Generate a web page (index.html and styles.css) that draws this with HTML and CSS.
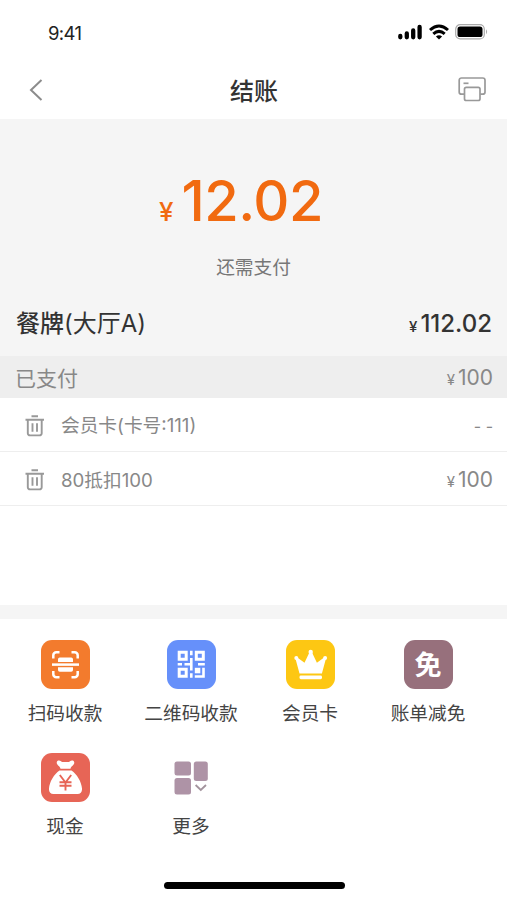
FILE: index.html
```html
<!DOCTYPE html>
<html lang="zh-CN">
<head>
<meta charset="UTF-8">
<meta name="viewport" content="width=device-width, initial-scale=1.0">
<title>结账</title>
<link rel="stylesheet" href="styles.css">
</head>
<body>
<div class="page">
  <div class="status-bar">
    <span class="time">9:41</span>
    <div class="status-icons">
      <svg width="25" height="16" viewBox="0 0 25 16" stroke="#000" stroke-width="4.300" stroke-linecap="round">
        <path d="M2.300 12v1.300M8.800 9.500v3.800M15.200 6.500v6.800M21.600 3v10.300"/>
      </svg>
      <svg width="20" height="16" viewBox="0 0 20 16" fill="none" stroke="#000" stroke-width="3">
        <path d="M1 6Q10 -2 19 6M4.300 9.900Q10 4.900 15.700 9.900"/>
        <path d="M10 15.500L6.900 12.400Q10 10 13.100 12.400Z" fill="#000" stroke="none"/>
      </svg>
      <svg width="33" height="16" viewBox="0 0 33 16">
        <rect x="0.700" y="0.700" width="28.600" height="14.200" rx="4.500" fill="none" stroke="#aaa" stroke-width="1.200"/>
        <rect x="2.500" y="2.500" width="25" height="10.600" rx="2.600" fill="#000"/>
        <path d="M31 5.300q2.200 2.500 0 5z" fill="#aaa"/>
      </svg>
    </div>
  </div>

  <div class="nav">
    <svg width="14" height="22" viewBox="0 0 14 22" fill="none" stroke="#8c8c8c" stroke-width="2">
      <path d="M12.500 1L2 11l10.500 10"/>
    </svg>
    <h1>结账</h1>
    <svg width="28" height="25" viewBox="0 0 28 25" fill="none" stroke="#999" stroke-width="1.700">
      <path d="M6.500 17.200H3.500a2.300 2.300 0 0 1-2.300-2.300V3.300A2.300 2.300 0 0 1 3.500 1h21.200A2.300 2.300 0 0 1 27 3.300v11.600a2.300 2.300 0 0 1-2.300 2.300h-2.500"/>
      <rect x="6.500" y="10.300" width="15.500" height="13.200" rx="1.800"/>
      <path d="M5.500 6.300h5"/>
    </svg>
  </div>

  <div class="summary">
    <div class="amount"><span class="yen">¥</span><span class="num">12.02</span></div>
    <div class="tip">还需支付</div>
    <div class="table-row">
      <span><b>餐牌</b>(大厅A)</span>
      <span class="total"><span class="yen">¥</span>112.02</span>
    </div>
  </div>

  <div class="paid-title">
    <span>已支付</span>
    <span class="price"><span class="yen">¥</span>100</span>
  </div>
  <div class="paid-list">
    <div class="paid-item">
      <svg width="20" height="22" viewBox="0 0 20 22" fill="none" stroke="#999" stroke-width="1.900">
        <path d="M0.500 4.800h18.500M6.500 1.200h6.500M2.800 5v13.200a2.200 2.200 0 0 0 2.200 2.200h9.500a2.200 2.200 0 0 0 2.200-2.200V5M7.500 8.300v8.500M12 8.300v8.500"/>
      </svg>
      <span class="name">会员卡(卡号:111)</span>
      <span class="dash">- -</span>
    </div>
    <div class="paid-item">
      <svg width="20" height="22" viewBox="0 0 20 22" fill="none" stroke="#999" stroke-width="1.900">
        <path d="M0.500 4.800h18.500M6.500 1.200h6.500M2.800 5v13.200a2.200 2.200 0 0 0 2.200 2.200h9.500a2.200 2.200 0 0 0 2.200-2.200V5M7.500 8.300v8.500M12 8.300v8.500"/>
      </svg>
      <span class="name">80抵扣100</span>
      <span class="price"><span class="yen">¥</span>100</span>
    </div>
  </div>

  <div class="pay-grid">
    <div class="pay">
      <div class="icon orange">
        <svg width="49" height="49" viewBox="0 0 49 49" fill="none" stroke="#fff" stroke-width="2.500">
          <path d="M12.300 18.500v-3.200a3 3 0 0 1 3-3h3.200M30.500 12.300h3.200a3 3 0 0 1 3 3v3.200M12.300 31v3.200a3 3 0 0 0 3 3h3.200M30.500 37.200h3.200a3 3 0 0 0 3-3V31"/>
          <path d="M17 22v-2.800a1.800 1.800 0 0 1 1.800-1.800h11.400a1.800 1.800 0 0 1 1.800 1.800V22zM17 27.200V30a1.800 1.800 0 0 0 1.800 1.800h11.400A1.800 1.800 0 0 0 32 30v-2.800z" fill="#fff" stroke="none"/>
          <path d="M11 24.600h27"/>
        </svg>
      </div>
      <span>扫码收款</span>
    </div>
    <div class="pay">
      <div class="icon blue">
        <svg width="49" height="49" viewBox="0 0 49 49" fill="none" stroke="#fff" stroke-width="3">
          <path d="M12.200 12.200h7v7h-7zM29.300 12.200h7v7h-7zM12.200 29.300h7v7h-7z"/>
          <path d="M24.300 10.700v4.500M24.300 18v12.500M24.300 33.300v4.500M10.700 24.300H15M17.500 24.300h7M31 24.300h6.800" stroke-width="2.600"/>
          <path d="M36.500 27.800v8.700h-8.700" stroke-width="2.600"/>
          <path d="M27.800 27.800h5.500v5.500h-5.500z" fill="#fff" stroke="none"/>
        </svg>
      </div>
      <span>二维码收款</span>
    </div>
    <div class="pay">
      <div class="icon yellow">
        <svg width="49" height="49" viewBox="0 0 49 49" fill="#fff">
          <path d="M13.500 33.500L9.500 18.800l1.800-1.300 7.200 5.200 5-10.500h2.400l5 10.500 7.200-5.200 1.800 1.300-4 14.700z"/>
          <circle cx="24.700" cy="12" r="2.200"/>
          <circle cx="10.300" cy="18" r="2"/>
          <circle cx="39.100" cy="18" r="2"/>
          <rect x="13.500" y="35.500" width="22.500" height="3.700" rx="1.400"/>
        </svg>
      </div>
      <span>会员卡</span>
    </div>
    <div class="pay">
      <div class="icon purple">免</div>
      <span>账单减免</span>
    </div>
    <div class="pay">
      <div class="icon red">
        <svg width="49" height="49" viewBox="0 0 49 49" fill="none">
          <path d="M19.500 15.700c-.5-2.500-3.800-3.700-3.800-6 0-2.500 3-2.500 4.300-1.500 1.500 1.300 2.500.8 4.500.800s3 .5 4.500-.8c1.300-1 4.300-1 4.300 1.500 0 2.300-3.300 3.500-3.800 6zM18.500 17.500h12c5.500 3.500 10 11.500 10.500 18 .3 3.500-1.500 5.500-4.500 5.500h-24c-3 0-4.800-2-4.500-5.500.5-6.500 5-14.500 10.500-18z" fill="#fff"/>
          <path d="M18.800 22l5.700 7.500 5.700-7.500M24.500 29.500v8M18.500 29.300h12M18.500 32.800h12" stroke="#e76556" stroke-width="1.900"/>
        </svg>
      </div>
      <span>现金</span>
    </div>
    <div class="pay">
      <div class="icon">
        <svg width="49" height="49" viewBox="0 0 49 49" fill="#ae93a6">
          <rect x="7.500" y="8.500" width="16.500" height="14" rx="2.500"/>
          <rect x="26.800" y="8.500" width="14" height="19.500" rx="2.500"/>
          <rect x="7.500" y="25" width="16.500" height="16.500" rx="2.500"/>
          <path d="M28.600 32l5.200 5 5.200-5" fill="none" stroke="#a3939d" stroke-width="1.800"/>
        </svg>
      </div>
      <span>更多</span>
    </div>
  </div>
  <div class="home-bar"></div>
</div>
</body>
</html>
```
FILE: styles.css
```css
* {
  box-sizing: border-box;
}
body {
  margin: 0;
  background: #fff;
  color: #333;
  font-family: Inter, "Noto Sans CJK SC", sans-serif;
}
svg {
  display: block;
}
.page {
  height: 900px;
  display: flex;
  flex-direction: column;
}
.status-bar {
  height: 62px;
  padding: 2px 19px 0 48px;
  display: flex;
  justify-content: space-between;
  align-items: center;
}
.time {
  padding-top: 2px;
  font-size: 18.5px;
  letter-spacing: -0.6px;
  color: #222;
}
.status-icons {
  display: flex;
  gap: 6px;
}
.nav {
  height: 57px;
  padding: 0 21px 2px 29px;
  display: flex;
  justify-content: space-between;
  align-items: center;
}
.nav h1 {
  margin: 0;
  padding: 4px 0 0 7px;
  font-size: 24px;
  line-height: 36px;
  font-weight: 500;
}
.summary {
  height: 237px;
  background: #f5f5f5;
}
.amount {
  height: 136px;
  padding: 48px 25px 0 0;
  display: flex;
  justify-content: center;
  align-items: baseline;
  color: #f16a10;
  font-size: 56px;
  line-height: 68px;
  font-weight: 500;
}
.amount .num {
  font-weight: 550;
  letter-spacing: -0.5px;
}
.amount .yen {
  margin-right: 8px;
  font-size: 26px;
}
.tip {
  height: 24px;
  line-height: 26px;
  text-align: center;
  font-size: 18.7px;
  color: #777;
}
.table-row {
  height: 77px;
  padding: 12px 15px 0 16px;
  display: flex;
  justify-content: space-between;
  align-items: center;
  font-size: 24px;
  line-height: 36px;
}
.table-row b {
  font-weight: 500;
}
.total {
  padding-top: 3px;
  font-weight: 500;
}
.total .yen {
  margin-right: 3px;
  font-size: 15px;
}
.paid-title {
  height: 42px;
  padding: 3px 14px 0 15px;
  display: flex;
  justify-content: space-between;
  align-items: center;
  background: #eee;
  color: #888;
  font-size: 21px;
  line-height: 32px;
}
.price {
  padding-top: 1px;
  font-size: 21px;
}
.price .yen {
  margin-right: 3px;
  font-size: 15px;
}
.paid-list {
  height: 207px;
  color: #888;
}
.paid-item {
  height: 54px;
  padding: 0 14px 0 25px;
  display: flex;
  align-items: center;
  border-bottom: 1px solid #eee;
}
.paid-item svg {
  margin-top: 2px;
}
.name {
  flex: 1;
  margin-left: 16px;
  font-size: 18.7px;
}
.paid-item:first-child .name {
  padding-bottom: 3px;
}
.dash {
  padding-top: 2px;
  font-size: 16px;
}
.pay-grid {
  border-top: 14px solid #f5f5f5;
  padding-top: 21px;
  display: grid;
  grid-template-columns: 130px 122px 116px 120px;
  grid-auto-rows: 113px;
}
.pay {
  display: flex;
  flex-direction: column;
  align-items: center;
  gap: 11px;
  font-size: 18.7px;
  line-height: 28px;
  color: #444;
}
.icon {
  width: 49px;
  height: 49px;
  border-radius: 11px;
}
.orange {
  background: #f37b2d;
}
.blue {
  background: #6690fa;
}
.yellow {
  background: #fdc713;
}
.purple {
  background: #97707c;
  color: #fff;
  text-align: center;
  font-size: 27px;
  line-height: 52px;
  font-weight: 700;
}
.red {
  background: #e76556;
}
.home-bar {
  width: 181px;
  height: 7px;
  margin: auto auto 11px 164px;
  border-radius: 4px;
  background: #000;
}
```
